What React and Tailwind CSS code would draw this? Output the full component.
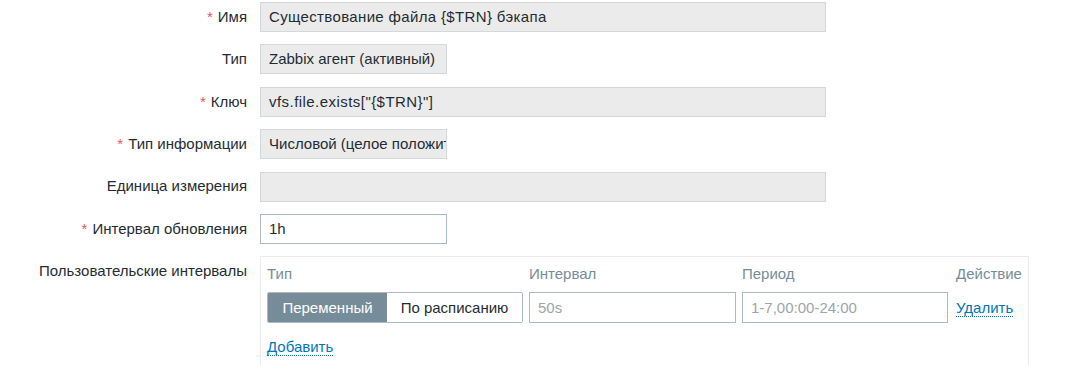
import React from 'react';

// Item form fragment (Zabbix style)
const ROWS = [
  { label: 'Имя', required: true, value: 'Существование файла {$TRN} бэкапа', width: 'w-[566px]', readonly: true, track: 'tracking-[0.35px]' },
  { label: 'Тип', value: 'Zabbix агент (активный)', width: 'w-[187px]', readonly: true },
  { label: 'Ключ', required: true, value: 'vfs.file.exists["{$TRN}"]', width: 'w-[566px]', readonly: true, track: 'tracking-[0.45px]' },
  { label: 'Тип информации', required: true, value: 'Числовой (целое положительное)', width: 'w-[187px]', readonly: true },
  { label: 'Единица измерения', value: '', width: 'w-[566px]', readonly: true },
  { label: 'Интервал обновления', required: true, value: '1h', width: 'w-[187px]', readonly: false },
];

const Label = ({ text, required }) => (
  <div className="h-[30px] flex items-center justify-end whitespace-nowrap">
    {required && <span className="text-[#e45959] mr-[5px]">*</span>}
    {text}
  </div>
);

const Field = ({ value, width, readonly, track = '' }) => (
  <div
    className={`h-[30px] ${width} ${track} px-[8px] flex items-center overflow-hidden whitespace-nowrap border ${
      readonly ? 'bg-[#ebebeb] border-[#d3d8dc]' : 'bg-white border-[#acbbc2]'
    }`}
  >
    {value}
  </div>
);

const App = () => {
  return (
    <div
      className="w-[1070px] h-[365px] overflow-hidden bg-white text-[15px] text-[#1f2c33]"
      style={{ fontFamily: '"Liberation Sans", Arial, sans-serif' }}
    >
      <div className="grid grid-cols-[247px_1fr] gap-x-[13px] gap-y-[12.4px] pt-[2px]">
        {ROWS.map((row) => (
          <React.Fragment key={row.label}>
            <Label text={row.label} required={row.required} />
            <Field value={row.value} width={row.width} readonly={row.readonly} track={row.track} />
          </React.Fragment>
        ))}

        {/* Custom intervals */}
        <Label text="Пользовательские интервалы" />
        <div className="w-[769px] border border-[#ebebeb] px-[6px] pt-[5px] pb-[20px]">
          <div className="grid grid-cols-[256px_207px_206px_1fr] gap-x-[6px] text-[#768d99] h-[24px] items-center">
            <div>Тип</div>
            <div>Интервал</div>
            <div>Период</div>
            <div className="pl-[2px]">Действие</div>
          </div>
          <div className="grid grid-cols-[256px_207px_206px_1fr] gap-x-[6px] mt-[6px] h-[31px]">
            <div className="flex h-[31px] rounded-[2px] border border-[#acbbc2] overflow-hidden">
              <div className="w-[119px] bg-[#768d99] text-white flex items-center justify-center">Переменный</div>
              <div className="flex-1 bg-white flex items-center justify-center">По расписанию</div>
            </div>
            <div className="border border-[#acbbc2] px-[8px] flex items-center text-[#9aa6ad]">50s</div>
            <div className="border border-[#acbbc2] px-[8px] flex items-center text-[#9aa6ad]">1-7,00:00-24:00</div>
            <div className="flex items-center pl-[2px]">
              <span className="text-[#0275b8] border-b border-dotted border-[#0275b8] leading-[17px]">Удалить</span>
            </div>
          </div>
          <div className="mt-[13px]">
            <span className="text-[#0275b8] border-b border-dotted border-[#0275b8] leading-[17px] inline-block">Добавить</span>
          </div>
        </div>
      </div>
    </div>
  );
};

export default App;
